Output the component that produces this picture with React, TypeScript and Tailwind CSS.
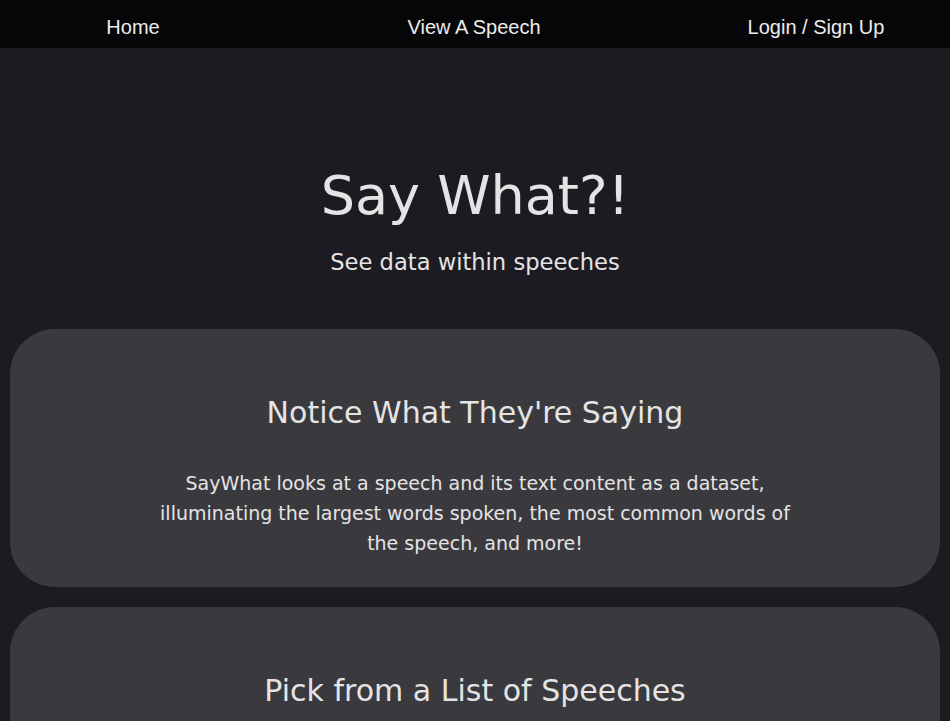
export default function App() {
  const nav = ['Home', 'View A Speech', 'Login / Sign Up'];
  return (
    <div className="min-h-screen bg-[#1c1b21] text-[#e4e4e4]">
      <nav className="h-12 bg-[#060608] grid grid-cols-[266px_1fr_268px] items-center pt-[6px] font-['Liberation_Sans',Arial,sans-serif] text-[20px] text-[#ececec]">
        {nav.map((n) => (
          <a key={n} href="#" className="text-center">{n}</a>
        ))}
      </nav>
      <main className="font-['DejaVu_Sans',Verdana,sans-serif] px-[10px]">
        <header className="flex flex-col items-center pt-[116px] pb-[52px]">
          <h1 className="text-[54px] leading-[64px]">Say What?!</h1>
          <p className="text-[22.6px] leading-[30px] mt-[19px]">See data within speeches</p>
        </header>
        <section className="bg-[#3a393e] rounded-[45px] flex flex-col items-center pt-[62px] pb-[29px] px-10">
          <h2 className="text-[30px] leading-[44px]">Notice What They're Saying</h2>
          <p className="text-[19px] leading-[30px] text-center max-w-[656px] mt-[33px]">
            SayWhat looks at a speech and its text content as a dataset, illuminating the largest words spoken, the most common words of the speech, and more!
          </p>
        </section>
        <section className="bg-[#3a393e] rounded-[45px] flex flex-col items-center pt-[62px] pb-[160px] px-10 mt-5">
          <h2 className="text-[30px] leading-[44px]">Pick from a List of Speeches</h2>
        </section>
      </main>
    </div>
  );
}
